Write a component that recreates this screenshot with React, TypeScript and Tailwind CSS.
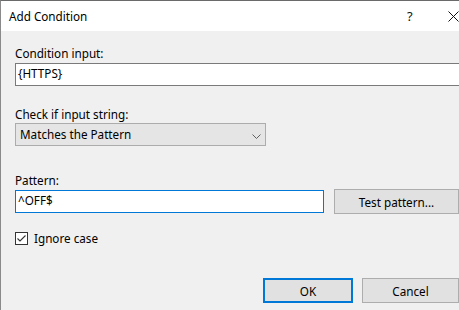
import React from "react";

export default function App() {
  return (
    <div
      className="w-[459px] h-[310px] overflow-hidden bg-[#f0f0f0] border-t border-l border-t-[#6a6a6a] border-l-[#8a8a8a] text-black text-[11.7px] leading-[16px]"
      style={{ fontFamily: '"Noto Sans", "Open Sans", sans-serif' }}
    >
      {/* Title bar */}
      <div className="h-[30px] bg-white flex items-center pl-[8px]">
        <span className="flex-1">Add Condition</span>
        <span className="w-[10px] text-[13px] mr-[31px] text-[#111]">?</span>
        <svg width="11" height="11" viewBox="0 0 11 11" className="mr-[0px]">
          <path d="M0.5 0.5 L10.5 10.5 M10.5 0.5 L0.5 10.5" stroke="#111" strokeWidth="1" />
        </svg>
      </div>

      {/* Body */}
      <div className="pl-[14px] pt-[14px] flex flex-col">
        <div>Condition input:</div>
        <div className="mt-[2px] h-[23px] w-[450px] bg-white border border-[#7a7a7a] pl-[2px] pt-[1px]">
          {"{HTTPS}"}
        </div>

        <div className="mt-[20px]">Check if input string:</div>
        <div className="mt-[1px] h-[23px] w-[251px] bg-[#e5e5e5] border border-[#acacac] pl-[4px] pt-[2px] flex">
          <span className="flex-1">Matches the Pattern</span>
          <svg width="9" height="5" viewBox="0 0 9 5" className="mt-[8px] mr-[4px]">
            <path d="M0.5 0.5 L4.5 4.5 L8.5 0.5" stroke="#606060" strokeWidth="1" fill="none" />
          </svg>
        </div>

        <div className="mt-[26px]">Pattern:</div>
        <div className="mt-[1px] flex items-start">
          <div className="mt-[1px] h-[23px] w-[309px] bg-white border border-[#0078d7] pl-[2px] pt-[1px]">
            ^OFF$
          </div>
          <div className="ml-[10px] h-[25px] w-[125px] bg-[#e1e1e1] border border-[#adadad] flex items-center justify-center">
            Test pattern...
          </div>
        </div>

        <div className="mt-[16px] flex items-center">
          <div className="w-[13px] h-[13px] border border-[#333333] bg-white flex items-center justify-center">
            <svg width="11" height="11" viewBox="0 0 11 11">
              <path d="M1.5 5.5 L4 8 L9.5 2.5" stroke="#333" strokeWidth="1.1" fill="none" />
            </svg>
          </div>
          <span className="ml-[6px]">Ignore case</span>
        </div>

        <div className="mt-[32px] flex pl-[248px]">
          <div className="h-[25px] w-[92px] bg-[#e1e1e1] border-2 border-[#0078d7] flex items-center justify-center">
            OK
          </div>
          <div className="ml-[9px] h-[25px] w-[97px] shrink-0 bg-[#e1e1e1] border border-[#adadad] flex items-center justify-center">
            Cancel
          </div>
        </div>
      </div>
    </div>
  );
}
